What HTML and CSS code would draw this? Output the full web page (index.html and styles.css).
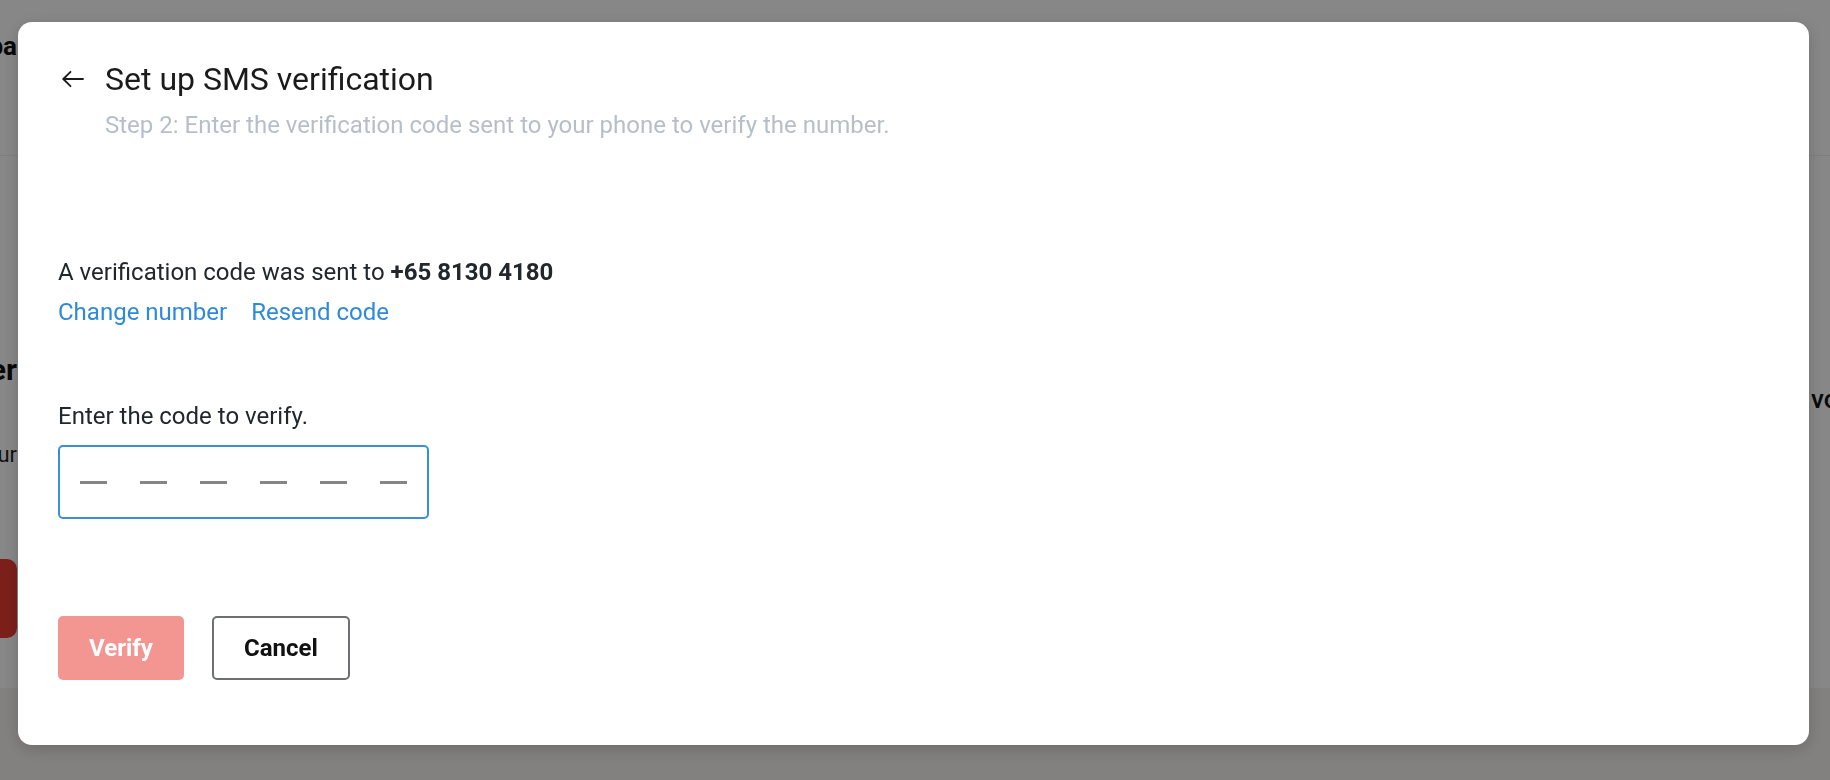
FILE: index.html
```html
<!DOCTYPE html>
<html lang="en">
<head>
<meta charset="utf-8">
<title>Set up SMS verification</title>
<link rel="stylesheet" href="styles.css">
</head>
<body>
<div class="page">
  <header class="page-header">
    <div class="bg-strip">
      <div class="bg-title">ba</div>
    </div>
  </header>
  <div class="panel panel-left">
    <div class="bg-strip">
      <div class="bg-heading">er</div>
      <div class="bg-text">ur</div>
      <div class="bg-button"></div>
    </div>
  </div>
  <div class="panel panel-right">
    <div class="bg-right-text">vo</div>
  </div>
</div>

<div class="overlay">
  <div class="modal" role="dialog" aria-labelledby="modal-title">
    <div class="modal-header">
      <button class="back-btn" aria-label="Back">
        <svg width="24" height="24" viewBox="0 0 24 24" fill="none" stroke="#1b1b1b" stroke-width="1.8" stroke-linecap="round" stroke-linejoin="round">
          <path d="M22 12H2.5"/>
          <path d="M9.5 4.8L2.3 12l7.2 7.2"/>
        </svg>
      </button>
      <h1 id="modal-title" class="modal-title">Set up SMS verification</h1>
    </div>
    <p class="modal-subtitle">Step 2: Enter the verification code sent to your phone to verify the number.</p>

    <p class="sent-text">A verification code was sent to <strong>+65 8130 4180</strong></p>
    <div class="links">
      <a href="#" class="link">Change number</a>
      <a href="#" class="link">Resend code</a>
    </div>

    <label class="code-label">Enter the code to verify.</label>
    <div class="code-input">
      <span class="dash"></span>
      <span class="dash"></span>
      <span class="dash"></span>
      <span class="dash"></span>
      <span class="dash"></span>
      <span class="dash"></span>
    </div>

    <div class="actions">
      <button class="btn btn-primary" disabled>Verify</button>
      <button class="btn btn-secondary">Cancel</button>
    </div>
  </div>
</div>
</body>
</html>
```

FILE: styles.css
```css
* {
  box-sizing: border-box;
}

html, body {
  margin: 0;
  padding: 0;
  height: 100%;
}

body {
  font-family: Roboto, "Liberation Sans", Arial, sans-serif;
  background: #f7f4f0;
  overflow: hidden;
}

/* ---------- background page (behind the modal) ---------- */
.page {
  display: grid;
  grid-template-columns: 1177px 1fr;
  grid-template-rows: 156px 532px;
  column-gap: 32px;
}

.page-header {
  grid-column: 1 / -1;
  background: #ffffff;
  border-bottom: 1px solid #f2efeb;
}

.panel {
  background: #ffffff;
}

.panel-right {
  display: flex;
  justify-content: flex-end;
}

.bg-strip {
  width: 17px;
  overflow: hidden;
  display: flex;
  flex-direction: column;
  align-items: flex-end;
}

.bg-title {
  margin-top: 31px;
  font-size: 26px;
  font-weight: 700;
  line-height: 30px;
  color: #111;
  white-space: nowrap;
}

.bg-heading {
  margin-top: 196px;
  font-size: 30px;
  font-weight: 700;
  line-height: 36px;
  color: #111;
  white-space: nowrap;
}

.bg-text {
  margin-top: 53px;
  font-size: 22px;
  line-height: 28px;
  color: #222;
  white-space: nowrap;
}

.bg-button {
  margin-top: 90px;
  width: 17px;
  height: 79px;
  background: #ea3b31;
  border-radius: 0 10px 10px 0;
}

.bg-right-text {
  margin-top: 228px;
  width: 19px;
  overflow: hidden;
  font-size: 26px;
  font-weight: 500;
  line-height: 30px;
  color: #111;
  white-space: nowrap;
}

/* ---------- overlay + modal ---------- */
.overlay {
  position: fixed;
  inset: 0;
  background: rgba(0, 0, 0, 0.47);
  display: flex;
  padding: 22px 21px 35px 18px;
}

.modal {
  flex: 1;
  background: #ffffff;
  border-radius: 14px;
  box-shadow: 0 4px 16px rgba(0, 0, 0, 0.18);
  padding: 38px 40px;
  display: flex;
  flex-direction: column;
  align-items: flex-start;
}

.modal-header {
  display: flex;
  align-items: center;
  gap: 20px;
}

.back-btn {
  width: 24px;
  height: 24px;
  padding: 0;
  margin-left: 3px;
  border: 0;
  background: none;
  display: flex;
  align-items: center;
  justify-content: center;
  cursor: pointer;
}

.modal-title {
  margin: 0;
  font-size: 32px;
  font-weight: 400;
  line-height: 38px;
  color: #1b1b1b;
}

.modal-subtitle {
  margin: 11px 0 0 47px;
  font-size: 24px;
  line-height: 32px;
  color: #b6bfc9;
}

.sent-text {
  margin: 115px 0 0 0;
  font-size: 24px;
  line-height: 32px;
  color: #22272b;
}

.sent-text strong {
  font-weight: 700;
}

.links {
  margin-top: 8px;
  display: flex;
  gap: 24px;
  font-size: 24px;
  line-height: 32px;
}

.link {
  color: #2f89db;
  text-decoration: none;
}

.code-label {
  margin-top: 72px;
  font-size: 24px;
  line-height: 32px;
  color: #22272b;
}

.code-input {
  margin-top: 13px;
  width: 371px;
  height: 74px;
  border: 2px solid #3a8fd9;
  border-radius: 5px;
  display: flex;
  align-items: center;
  justify-content: center;
  gap: 33px;
}

.dash {
  width: 27px;
  height: 3px;
  background: #858585;
}

.actions {
  margin-top: 97px;
  display: flex;
  gap: 28px;
}

.btn {
  height: 64px;
  padding: 0 30px;
  border-radius: 5px;
  font-family: Roboto, "Liberation Sans", Arial, sans-serif;
  font-size: 24px;
  font-weight: 700;
  cursor: pointer;
}

.btn-primary {
  padding: 0 31px;
  background: #f39591;
  color: #ffffff;
  border: 0;
}

.btn-secondary {
  background: #ffffff;
  color: #111111;
  border: 2px solid #6c7075;
}
```
